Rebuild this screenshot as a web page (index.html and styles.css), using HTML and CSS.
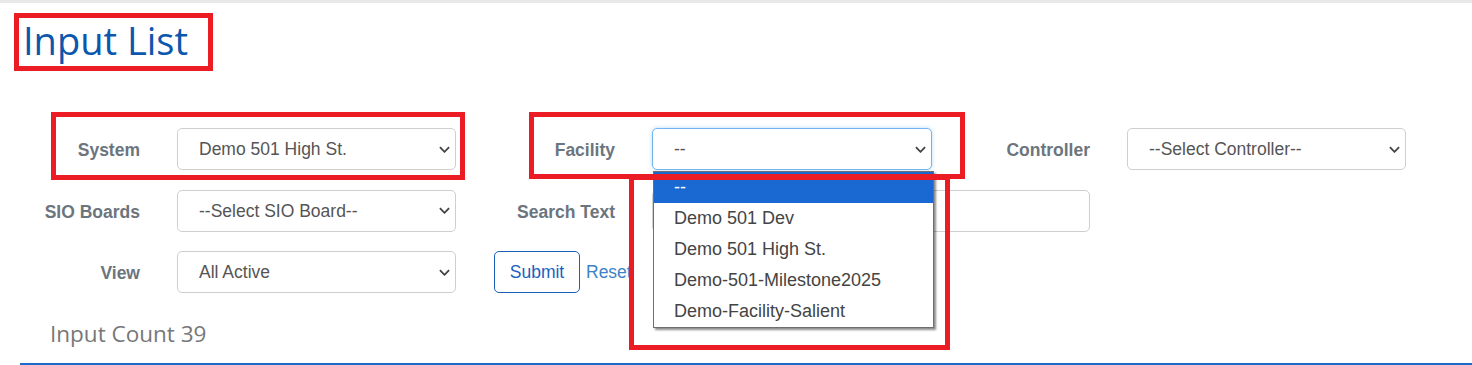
FILE: index.html
```html
<!DOCTYPE html>
<html>
<head>
	<title>Input List</title>
	<link rel="stylesheet" href="styles.css">
</head>
<body>
	<div class="page">
		<h1 class="page-title">Input List</h1>

		<form class="filter-form">
			<label class="filter-label">System</label>
			<div class="select-wrap">
				<select class="form-select"><option>Demo 501 High St.</option></select>
				<svg class="chevron" viewBox="0 0 12 7"><path d="M1 1 L6 6 L11 1"/></svg>
			</div>

			<label class="filter-label">Facility</label>
			<div class="select-wrap facility-wrap">
				<select class="form-select is-focused"><option>--</option></select>
				<svg class="chevron" viewBox="0 0 12 7"><path d="M1 1 L6 6 L11 1"/></svg>
				<!-- open dropdown list -->
				<ul class="listbox">
					<li class="active">--</li>
					<li>Demo 501 Dev</li>
					<li>Demo 501 High St.</li>
					<li>Demo-501-Milestone2025</li>
					<li>Demo-Facility-Salient</li>
				</ul>
			</div>

			<label class="filter-label">Controller</label>
			<div class="select-wrap">
				<select class="form-select"><option>--Select Controller--</option></select>
				<svg class="chevron" viewBox="0 0 12 7"><path d="M1 1 L6 6 L11 1"/></svg>
			</div>

			<label class="filter-label">SIO Boards</label>
			<div class="select-wrap">
				<select class="form-select"><option>--Select SIO Board--</option></select>
				<svg class="chevron" viewBox="0 0 12 7"><path d="M1 1 L6 6 L11 1"/></svg>
			</div>

			<label class="filter-label">Search Text</label>
			<input type="text" class="search-input">

			<label class="filter-label row-start">View</label>
			<div class="select-wrap">
				<select class="form-select"><option>All Active</option></select>
				<svg class="chevron" viewBox="0 0 12 7"><path d="M1 1 L6 6 L11 1"/></svg>
			</div>

			<div class="form-actions">
				<button type="button" class="btn-submit">Submit</button>
				<a href="#" class="reset-link">Reset</a>
			</div>
		</form>

		<div class="input-count">Input Count 39</div>
		<div class="table-rule"></div>
	</div>

	<!-- annotation boxes drawn over the screenshot -->
	<div class="mark mark-title"></div>
	<div class="mark mark-system"></div>
	<div class="mark mark-facility"></div>
	<div class="mark mark-list"></div>
</body>
</html>
```

FILE: styles.css
```css
body {
	margin: 0;
	position: relative;
	border-top: 3px solid #e8e8e8;
	background: #fff;
	font-family: "Liberation Sans", Arial, sans-serif;
	overflow: hidden;
}

.page {
	padding-left: 20px;
}

.page-title {
	margin: 14px 0 0 3px;
	font-family: "Open Sans", sans-serif;
	font-weight: 400;
	font-size: 38px;
	line-height: 46px;
	color: #0a57ad;
}

/* Filter form */
.filter-form {
	margin-top: 65px;
	display: grid;
	grid-template-columns: 120px 279px 122px 280px 121px 279px;
	grid-auto-rows: 42px;
	column-gap: 37px;
	row-gap: 19.5px;
}

.filter-label {
	justify-self: end;
	align-self: center;
	padding-top: 3px;
	font-weight: bold;
	font-size: 17.5px;
	color: #6c757d;
}

.filter-label.row-start {
	grid-column: 1;
}

.select-wrap {
	display: grid;
	align-items: center;
}

.select-wrap > * {
	grid-area: 1 / 1;
}

.form-select {
	appearance: none;
	-webkit-appearance: none;
	height: 42px;
	width: 100%;
	margin: 0;
	padding: 0 30px 0 21px;
	border: 1px solid #cfcfcf;
	border-radius: 5px;
	background: #fff;
	font-family: "Liberation Sans", Arial, sans-serif;
	font-size: 17.5px;
	color: #555;
	outline: none;
}

.form-select.is-focused {
	border-color: #74b4ec;
	box-shadow: 0 0 4px rgba(102, 175, 233, 0.45);
}

.chevron {
	justify-self: end;
	width: 11px;
	height: 7px;
	margin-right: 6px;
	fill: none;
	stroke: #444;
	stroke-width: 2;
	pointer-events: none;
}

.facility-wrap {
	position: relative;
}

.listbox {
	position: absolute;
	top: 100%;
	left: 1px;
	width: 279px;
	margin: 1px 0 0;
	padding: 0;
	list-style: none;
	background: #fff;
	border: 1px solid #6f6f6f;
	box-shadow: 2px 2px 2px rgba(0, 0, 0, 0.45);
	z-index: 5;
}

.listbox li {
	height: 31px;
	line-height: 31px;
	padding-left: 20px;
	font-size: 18px;
	color: #444;
	white-space: nowrap;
}

.listbox li.active {
	background: #1a68d1;
	color: #fff;
}

.search-input {
	grid-column: 4 / 6;
	height: 42px;
	box-sizing: border-box;
	margin: 0;
	border: 1px solid #cfcfcf;
	border-radius: 5px;
	background: #fff;
}

.form-actions {
	grid-column: 3 / 5;
	display: flex;
	align-items: center;
	gap: 6px;
	padding-left: 1px;
}

.btn-submit {
	height: 42px;
	width: 86px;
	border: 1px solid #1a5fb8;
	border-radius: 5px;
	background: #fff;
	color: #1a5fbf;
	font-family: "Liberation Sans", Arial, sans-serif;
	font-size: 17.5px;
	cursor: pointer;
}

.reset-link {
	color: #3d84c6;
	font-size: 17.5px;
	text-decoration: none;
}

.input-count {
	margin: 26px 0 0 30px;
	font-family: "Open Sans", sans-serif;
	font-size: 22.5px;
	line-height: 30px;
	color: #777;
}

.table-rule {
	margin-top: 14px;
	height: 2px;
	background: #1a6bc9;
}

/* red annotation boxes */
.mark {
	position: absolute;
	border: 5px solid #ec1c24;
	box-sizing: border-box;
	z-index: 10;
	pointer-events: none;
}

.mark-title {
	left: 14px;
	top: 10px;
	width: 199px;
	height: 58px;
}

.mark-system {
	left: 51px;
	top: 109px;
	width: 414px;
	height: 68px;
}

.mark-facility {
	left: 529px;
	top: 109px;
	width: 436px;
	height: 67px;
}

.mark-list {
	left: 629px;
	top: 172px;
	width: 321px;
	height: 175px;
}
```
